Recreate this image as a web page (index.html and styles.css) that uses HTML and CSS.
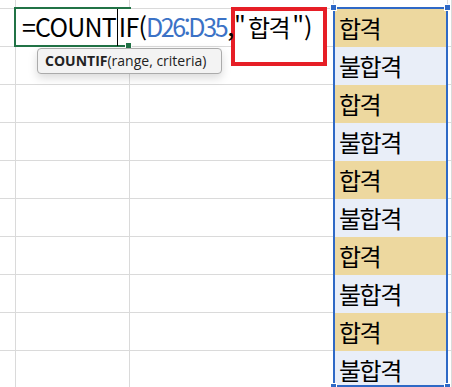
FILE: index.html
```html
<!DOCTYPE html>
<html lang="ko">
<head>
  <meta charset="UTF-8" />
  <meta name="viewport" content="width=device-width, initial-scale=1.0" />
  <title>COUNTIF</title>
  <link rel="stylesheet" href="styles.css">
</head>
<body>
  <div class="sheet">
    <div class="grid">
      <div></div><div></div><div></div><div class="top"></div><div></div>
      <div></div><div></div><div></div><div class="d pass">합격</div><div></div>
      <div></div><div></div><div></div><div class="d fail">불합격</div><div></div>
      <div></div><div></div><div></div><div class="d pass">합격</div><div></div>
      <div></div><div></div><div></div><div class="d fail">불합격</div><div></div>
      <div></div><div></div><div></div><div class="d pass">합격</div><div></div>
      <div></div><div></div><div></div><div class="d fail">불합격</div><div></div>
      <div></div><div></div><div></div><div class="d pass">합격</div><div></div>
      <div></div><div></div><div></div><div class="d fail">불합격</div><div></div>
      <div></div><div></div><div></div><div class="d pass">합격</div><div></div>
      <div></div><div></div><div></div><div class="d fail">불합격</div><div></div>
    </div>

    <div class="editor"></div>
    <div class="active-cell"><span class="fill-handle"></span></div>
    <div class="callout"></div>

    <div class="formula">=COUNT<span class="caret"></span>IF(<span class="ref">D26:D35</span><span class="tail">,"<span class="ko">합격</span>")</span></div>

    <div class="tooltip"><b>COUNTIF</b>(range, criteria)</div>

    <div class="selection">
      <span class="handle tl"></span>
      <span class="handle tr"></span>
      <span class="handle bl"></span>
      <span class="handle br"></span>
    </div>
  </div>
</body>
</html>
```

FILE: styles.css
```css
body {
  margin: 0;
  background: #fff;
  font-family: "Noto Sans CJK KR", "Noto Sans", sans-serif;
}

.sheet {
  position: relative;
  width: 452px;
  height: 387px;
  overflow: hidden;
}

/* cell grid */
.grid {
  display: grid;
  grid-template-columns: 16px 114px 204px 114px 1fr;
  grid-template-rows: 9px repeat(10, 38px);
}

.grid > div {
  box-sizing: border-box;
  border-right: 1px solid #dadada;
  border-bottom: 1px solid #dadada;
}

.grid .d {
  display: flex;
  align-items: center;
  padding-left: 5px;
  font-size: 24px;
  letter-spacing: -1.5px;
  color: #000;
}

.grid .pass {
  background: #edd89f;
  border-bottom-color: #edd89f;
}

.grid .fail {
  background: #e9eef8;
  border-bottom-color: #e9eef8;
}

/* editing cell */
.editor {
  position: absolute;
  left: 16px;
  top: 9px;
  width: 317px;
  height: 37px;
  background: #fff;
}

.active-cell {
  position: absolute;
  left: 14px;
  top: 7px;
  width: 117px;
  height: 40px;
  box-sizing: border-box;
  border: 2px solid #217346;
  border-right: none;
}

.fill-handle {
  position: absolute;
  right: -1px;
  bottom: -4px;
  width: 5px;
  height: 5px;
  background: #217346;
  border: 1px solid #fff;
}

.callout {
  position: absolute;
  left: 231px;
  top: 7px;
  width: 96px;
  height: 59px;
  box-sizing: border-box;
  border: 4px solid #e61e26;
  background: #fff;
}

.formula {
  position: absolute;
  left: 22px;
  top: 8px;
  font-size: 25px;
  line-height: 36px;
  letter-spacing: -0.8px;
  color: #000;
  white-space: nowrap;
}

.formula .ref {
  color: #3b72c6;
  letter-spacing: -2.4px;
}

.formula .tail {
  letter-spacing: 0;
  margin-left: 1px;
}

.formula .ko {
  font-size: 24px;
  letter-spacing: -1.5px;
  margin: 0 3px 0 2px;
}

.caret {
  display: inline-block;
  width: 0;
  height: 37px;
  margin: 0 1px;
  border-left: 1px solid #000;
  vertical-align: -9px;
}

/* function hint */
.tooltip {
  position: absolute;
  left: 37px;
  top: 48px;
  width: 185px;
  height: 26px;
  box-sizing: border-box;
  padding-left: 7px;
  border: 1px solid #ababab;
  border-radius: 4px;
  background: #f3f3f3;
  box-shadow: 0 4px 10px rgba(0, 0, 0, 0.15);
  font-family: "Open Sans", sans-serif;
  font-size: 14px;
  line-height: 24px;
  color: #222;
  white-space: nowrap;
}

.tooltip b {
  font-weight: 700;
}

/* selected range */
.selection {
  position: absolute;
  left: 333px;
  top: 7px;
  width: 115px;
  height: 380px;
  box-sizing: border-box;
  border: 2px solid #2f69c6;
}

.handle {
  position: absolute;
  width: 5px;
  height: 5px;
  background: #2f69c6;
  border: 1px solid #fff;
}

.handle.tl { left: -5px; top: -5px; }
.handle.tr { right: -5px; top: -5px; }
.handle.bl { left: -5px; bottom: -5px; }
.handle.br { right: -5px; bottom: -5px; }
```
